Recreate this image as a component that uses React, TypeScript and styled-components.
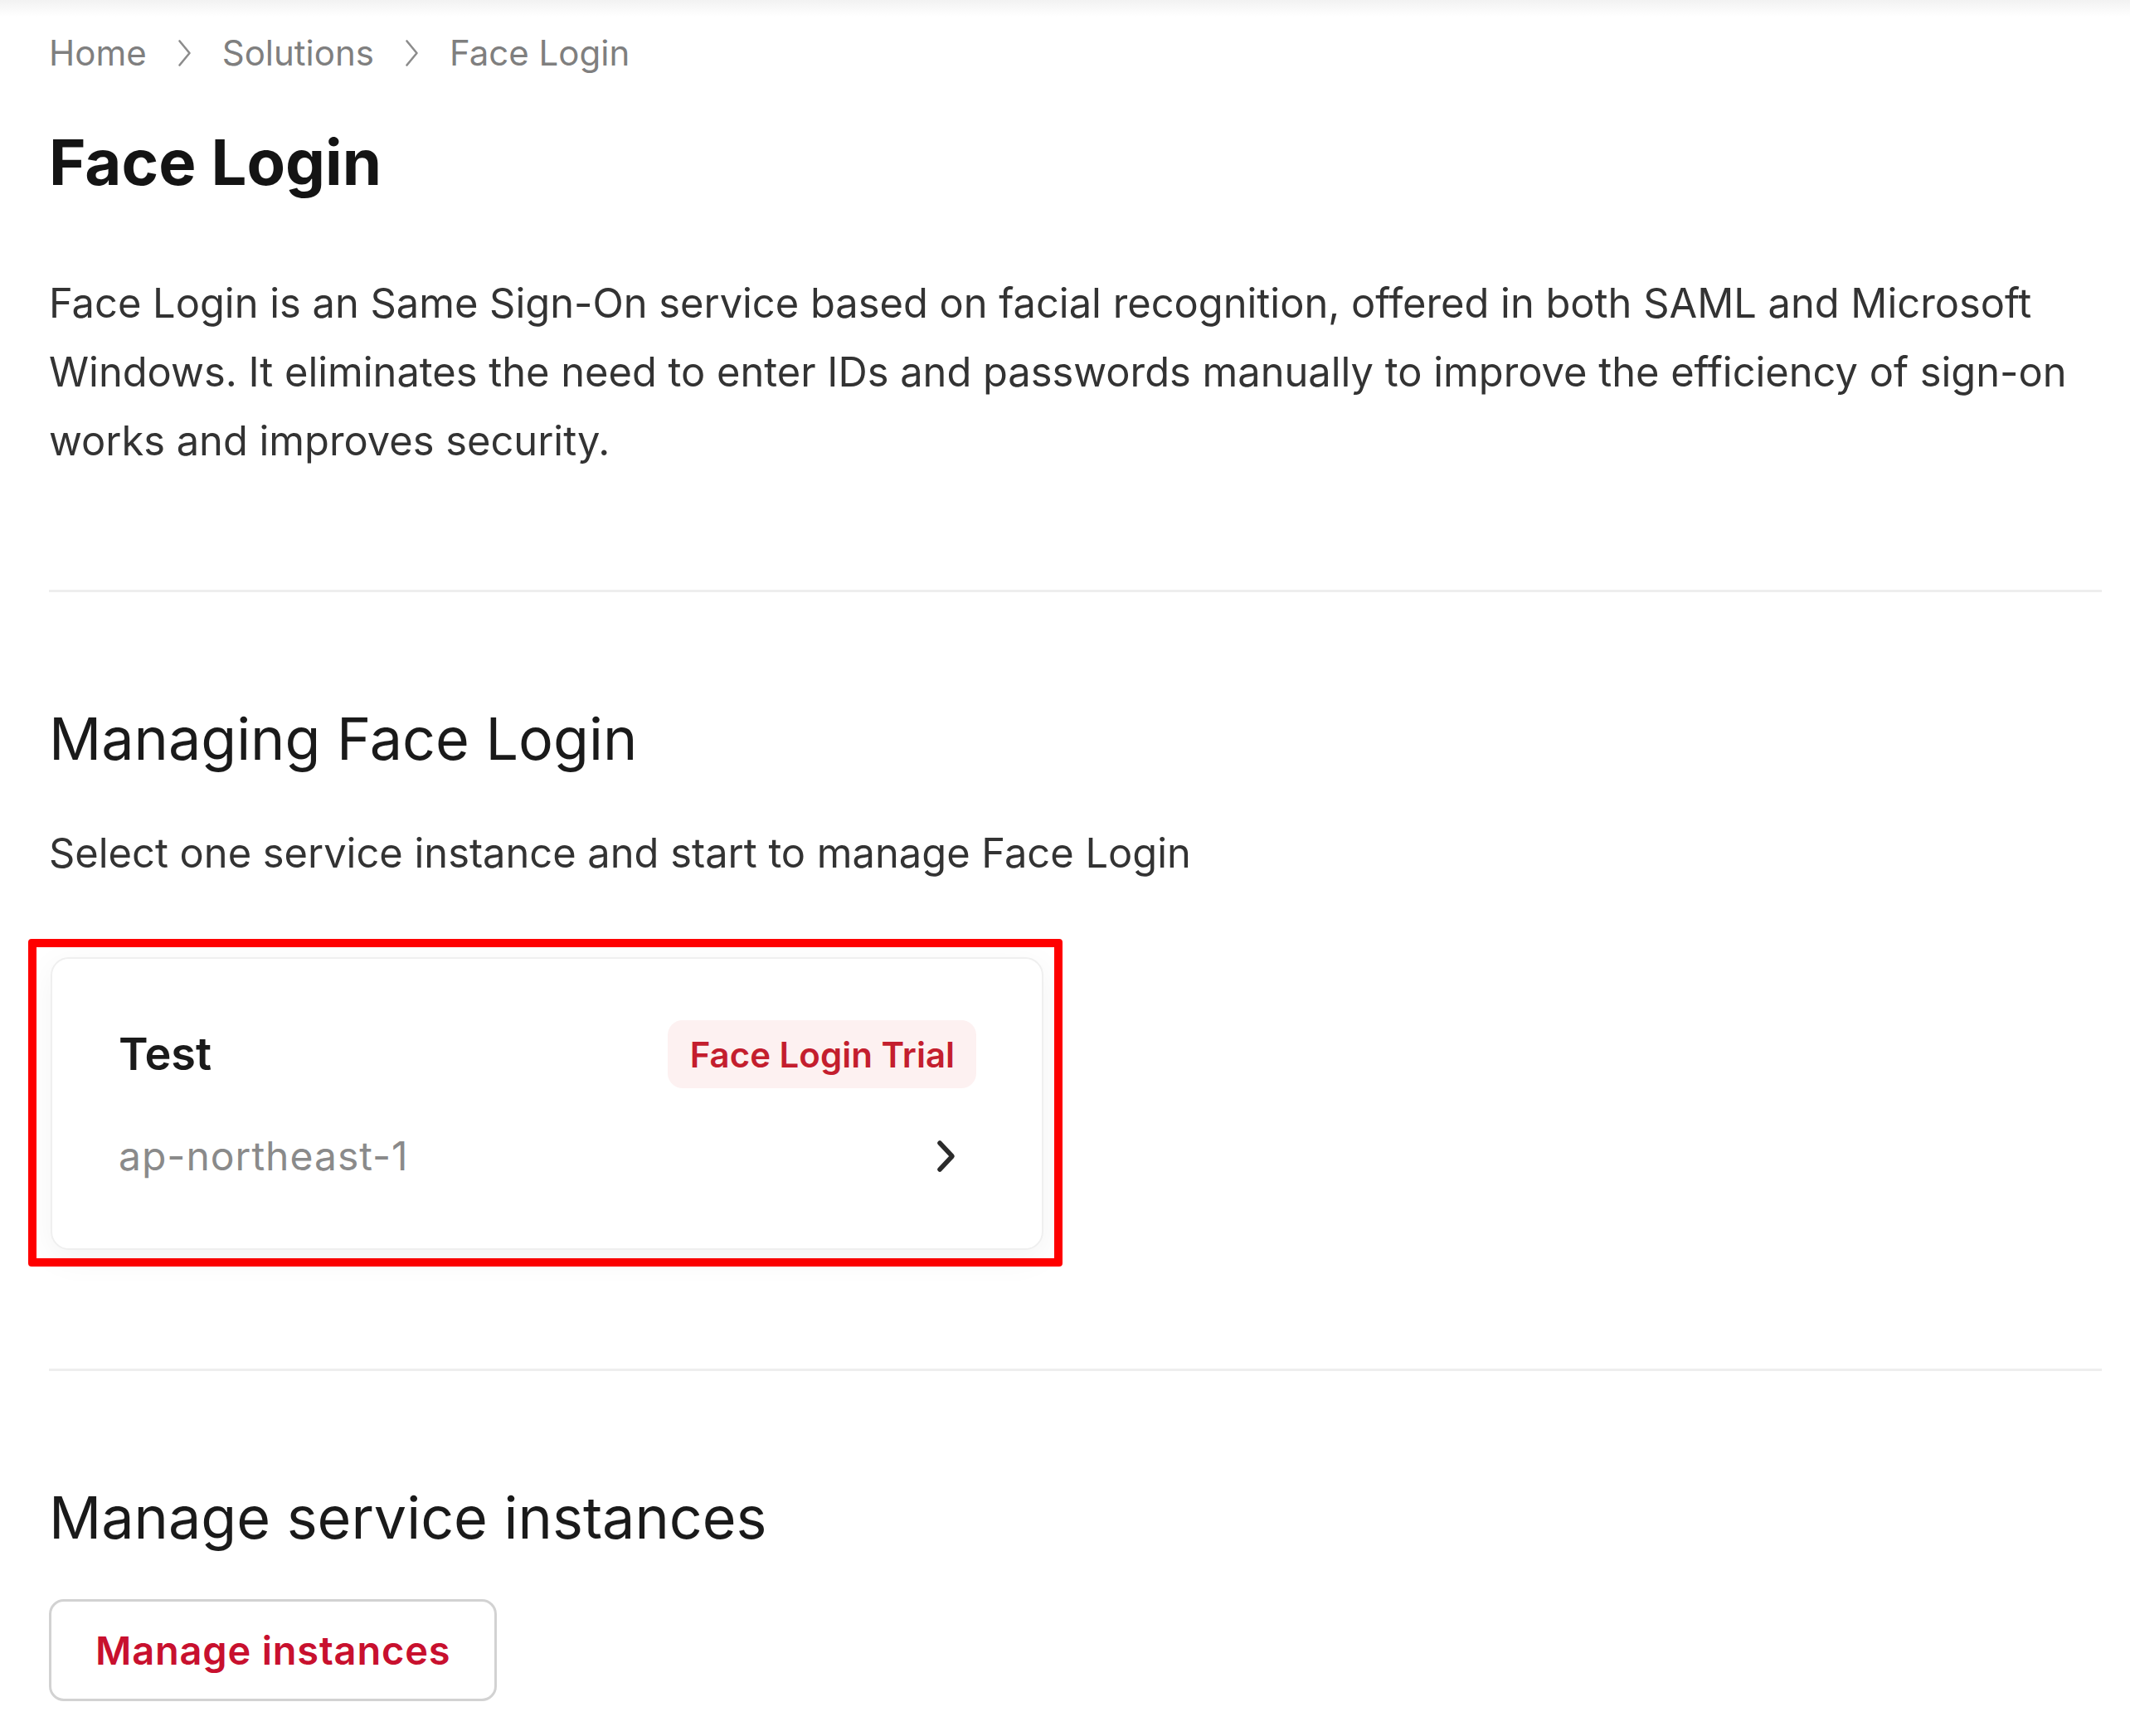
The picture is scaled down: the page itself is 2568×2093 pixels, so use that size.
import React from "react";
import styled, { createGlobalStyle } from "styled-components";

const Global = createGlobalStyle`
  html, body { margin: 0; padding: 0; background: #ffffff; }
  body { font-family: Inter, "Noto Sans", "Liberation Sans", sans-serif; color: #1a1a1a; }
  * { box-sizing: border-box; }
`;

const Page = styled.div`
  width: 2568px;
  min-height: 2093px;
  background: #ffffff;
  display: flex;
  flex-direction: column;
`;

const TopShade = styled.div`
  height: 20px;
  background: linear-gradient(#f2f2f2, #ffffff);
`;

const Content = styled.main`
  display: flex;
  flex-direction: column;
  padding: 14px 34px 0 59px;
`;

const Crumbs = styled.nav`
  display: flex;
  align-items: center;
  gap: 37px;
  height: 60px;
  font-size: 42px;
  line-height: 60px;
  color: #7f7f7f;
`;

const Crumb = styled.span`
  white-space: nowrap;
`;

const CrumbSep = () => (
  <svg width="17" height="34" viewBox="0 0 17 34" fill="none">
    <path d="M2.5 2.5 L14.5 17 L2.5 31.5" stroke="#8c8c8c" strokeWidth="2.6" strokeLinecap="round" strokeLinejoin="round" />
  </svg>
);

const Title = styled.h1`
  margin: 55px 0 0;
  font-size: 76px;
  line-height: 92px;
  font-weight: 700;
  color: #141414;
`;

const Lead = styled.p`
  margin: 83px 0 0;
  font-size: 48.8px;
  line-height: 83px;
  color: #333333;
`;

const Divider = styled.hr<{ $gap: number }>`
  margin: ${(p) => p.$gap}px 0 0;
  border: none;
  height: 3px;
  background: #eeeeee;
`;

const SectionTitle = styled.h2`
  margin: 135px 0 0;
  font-size: 70px;
  line-height: 84px;
  font-weight: 400;
  color: #1a1a1a;
`;

const SectionText = styled.p`
  margin: 54px 0 0;
  font-size: 48.8px;
  line-height: 83px;
  color: #333333;
`;

const Highlight = styled.div`
  align-self: flex-start;
  margin: 62px 0 0 -25px;
  padding: 12px 13px 10px 17px;
  border: 10px solid #ff0000;
  border-radius: 4px;
`;

const Card = styled.div`
  width: 1197px;
  height: 353px;
  background: #ffffff;
  border: 2px solid #efefef;
  border-radius: 22px;
  box-shadow: 0 10px 40px rgba(0, 0, 0, 0.05);
  padding: 74px 79px 81px 80px;
  display: flex;
  flex-direction: column;
  gap: 52px;
`;

const CardRow = styled.div`
  display: flex;
  align-items: center;
  justify-content: space-between;
`;

const CardName = styled.span`
  font-size: 54px;
  line-height: 82px;
  font-weight: 600;
  color: #1a1a1a;
`;

const Badge = styled.span`
  height: 82px;
  padding: 0 26px 0 27px;
  display: inline-flex;
  align-items: center;
  border-radius: 18px;
  background: #fdf1f1;
  color: #c41e2e;
  font-size: 42px;
  font-weight: 600;
  white-space: nowrap;
`;

const Region = styled.span`
  font-size: 48px;
  line-height: 60px;
  letter-spacing: 1px;
  color: #8a8a8a;
`;

const Chevron = styled.svg`
  margin-right: 24px;
  flex: none;
`;

const Button = styled.button`
  align-self: flex-start;
  margin-top: 56px;
  height: 123px;
  padding: 0 53px;
  display: inline-flex;
  align-items: center;
  background: #ffffff;
  border: 3px solid #d2d2d2;
  border-radius: 18px;
  font-family: inherit;
  font-size: 47px;
  letter-spacing: 0.8px;
  font-weight: 600;
  color: #c8102e;
  cursor: pointer;
`;

export default function App() {
  return (
    <Page>
      <Global />
      <TopShade />
      <Content>
        <Crumbs>
          <Crumb>Home</Crumb>
          <CrumbSep />
          <Crumb>Solutions</Crumb>
          <CrumbSep />
          <Crumb>Face Login</Crumb>
        </Crumbs>
        <Title>Face Login</Title>
        <Lead>
          Face Login is an Same Sign-On service based on facial recognition, offered in both SAML and Microsoft
          Windows. It eliminates the need to enter IDs and passwords manually to improve the efficiency of sign-on
          works and improves security.
        </Lead>
        <Divider $gap={138} />
        <SectionTitle>Managing Face Login</SectionTitle>
        <SectionText>Select one service instance and start to manage Face Login</SectionText>
        <Highlight>
          <Card>
            <CardRow>
              <CardName>Test</CardName>
              <Badge>Face Login Trial</Badge>
            </CardRow>
            <CardRow>
              <Region>ap-northeast-1</Region>
              <Chevron width="24" height="40" viewBox="0 0 24 40" fill="none">
                <path d="M4 4 L19 20 L4 36" stroke="#2b2b2b" strokeWidth="5.5" strokeLinecap="round" strokeLinejoin="round" />
              </Chevron>
            </CardRow>
          </Card>
        </Highlight>
        <Divider $gap={123} />
        <SectionTitle>Manage service instances</SectionTitle>
        <Button>Manage instances</Button>
      </Content>
    </Page>
  );
}
